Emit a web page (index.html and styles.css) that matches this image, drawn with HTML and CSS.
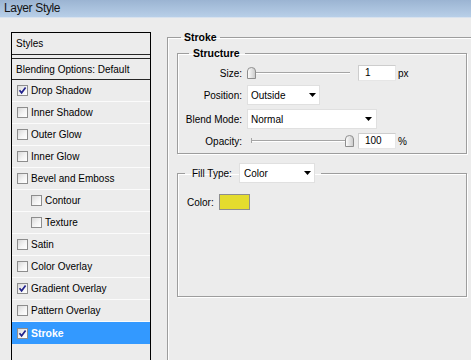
FILE: index.html
```html
<!DOCTYPE html>
<html>
<head>
<meta charset="utf-8">
<title>Layer Style</title>
<link rel="stylesheet" href="styles.css">
</head>
<body>
<div class="window">
  <div class="titlebar">Layer Style</div>
  <div class="main">
    <div class="styles-panel">
      <div class="panel-head">Styles</div>
      <div class="panel-blend">Blending Options: Default</div>
      <ul class="fx-list">
        <li class="fx"><span class="cb"><svg class="check" width="9" height="9" viewBox="0 0 9 9"><polyline points="1.5,4.2 3.6,6.8 7.6,1.6" /></svg></span>Drop Shadow</li>
        <li class="fx"><span class="cb"></span>Inner Shadow</li>
        <li class="fx"><span class="cb"></span>Outer Glow</li>
        <li class="fx"><span class="cb"></span>Inner Glow</li>
        <li class="fx"><span class="cb"></span>Bevel and Emboss</li>
        <li class="fx sub"><span class="cb"></span>Contour</li>
        <li class="fx sub"><span class="cb"></span>Texture</li>
        <li class="fx"><span class="cb"></span>Satin</li>
        <li class="fx"><span class="cb"></span>Color Overlay</li>
        <li class="fx"><span class="cb"><svg class="check" width="9" height="9" viewBox="0 0 9 9"><polyline points="1.5,4.2 3.6,6.8 7.6,1.6" /></svg></span>Gradient Overlay</li>
        <li class="fx"><span class="cb"></span>Pattern Overlay</li>
        <li class="fx selected"><span class="cb"><svg class="check" width="9" height="9" viewBox="0 0 9 9"><polyline points="1.5,4.2 3.6,6.8 7.6,1.6" /></svg></span>Stroke</li>
      </ul>
    </div>

    <fieldset class="group group-stroke">
      <legend class="group-title title-stroke">Stroke</legend>

      <fieldset class="group group-structure">
        <legend class="group-title title-structure">Structure</legend>
        <div class="form-grid">
          <span class="field-label">Size:</span>
          <div class="field-control">
            <div class="slider">
              <div class="slider-track"></div>
              <svg class="thumb" style="left:0px" width="9" height="12" viewBox="0 0 9 12"><defs><linearGradient id="tg1" x1="0" y1="0" x2="1" y2="0"><stop offset="0" stop-color="#ffffff"/><stop offset="1" stop-color="#c9c9c9"/></linearGradient></defs><path d="M0.5,11.5 V4 Q0.5,0.5 4.5,0.5 Q8.5,0.5 8.5,4 V11.5 Z" fill="url(#tg1)" stroke="#8e8e8e"/></svg>
            </div>
            <span class="textbox">1</span><span class="unit">px</span>
          </div>

          <span class="field-label">Position:</span>
          <div class="field-control">
            <div class="select select-position"><span>Outside</span><svg class="arrow" width="7" height="4" viewBox="0 0 7 4"><polygon points="0,0 7,0 3.5,4"/></svg></div>
          </div>

          <span class="field-label">Blend Mode:</span>
          <div class="field-control">
            <div class="select select-blend"><span>Normal</span><svg class="arrow" width="7" height="4" viewBox="0 0 7 4"><polygon points="0,0 7,0 3.5,4"/></svg></div>
          </div>

          <span class="field-label">Opacity:</span>
          <div class="field-control">
            <div class="slider">
              <div class="slider-track"></div>
              <svg class="thumb" style="left:98px" width="9" height="12" viewBox="0 0 9 12"><defs><linearGradient id="tg2" x1="0" y1="0" x2="1" y2="0"><stop offset="0" stop-color="#ffffff"/><stop offset="1" stop-color="#c9c9c9"/></linearGradient></defs><path d="M0.5,11.5 V4 Q0.5,0.5 4.5,0.5 Q8.5,0.5 8.5,4 V11.5 Z" fill="url(#tg2)" stroke="#8e8e8e"/></svg>
            </div>
            <span class="textbox">100</span><span class="unit">%</span>
          </div>
        </div>
      </fieldset>

      <fieldset class="group group-fill">
        <legend class="fill-legend"><span class="fill-label">Fill Type:</span><div class="select select-fill"><span>Color</span><svg class="arrow" width="7" height="4" viewBox="0 0 7 4"><polygon points="0,0 7,0 3.5,4"/></svg></div></legend>
        <div class="color-row"><span class="color-label">Color:</span><span class="swatch"></span></div>
      </fieldset>
    </fieldset>
  </div>
</div>
</body>
</html>
```

FILE: styles.css
```css
* { box-sizing: border-box; }
html, body { margin: 0; padding: 0; }
body {
  width: 471px;
  height: 360px;
  overflow: hidden;
  background: #ececec;
  font-family: "Liberation Sans", Arial, sans-serif;
  font-size: 10px;
  color: #000;
}
.window {
  width: 471px;
  height: 360px;
  display: flex;
  flex-direction: column;
  overflow: hidden;
}
.titlebar {
  flex: none;
  height: 18px;
  padding-left: 4px;
  background: linear-gradient(#9bb4d2, #b8cfe8);
  border-bottom: 1px solid #d8e2ee;
  font-size: 12px;
  letter-spacing: -0.35px;
  line-height: 17px;
  color: #141414;
}
.main {
  flex: 1;
  display: flex;
  align-items: flex-start;
  overflow: hidden;
}

/* left styles list */
.styles-panel {
  flex: none;
  margin: 14px 0 0 11px;
  width: 140px;
  height: 340px;
  border: 1px solid #000;
  background: #ececec;
}
.panel-head {
  height: 22px;
  padding-left: 4px;
  border-bottom: 1px solid #262626;
  display: flex;
  align-items: center;
}
.panel-blend {
  height: 22px;
  margin-top: 3px;
  padding-left: 4px;
  border-top: 1px solid #262626;
  border-bottom: 1px solid #262626;
  display: flex;
  align-items: center;
}
.fx-list {
  list-style: none;
  margin: 0;
  padding: 0;
}
.fx {
  height: 22px;
  padding-left: 5px;
  border-bottom: 1px solid #fbfbfb;
  display: flex;
  align-items: center;
  white-space: nowrap;
}
.fx.sub { padding-left: 19px; }
.fx.selected {
  height: 22px;
  border-bottom: none;
  background: #3399ff;
  color: #fff;
  font-weight: bold;
  font-size: 10.5px;
}
.cb {
  flex: none;
  width: 11px;
  height: 11px;
  margin-right: 3px;
  border: 1px solid #8d8d8d;
  background: linear-gradient(135deg, #d9d9d9, #f4f4f4 55%, #fff);
  display: flex;
  align-items: center;
  justify-content: center;
}
.check polyline {
  fill: none;
  stroke: #22228c;
  stroke-width: 1.7;
}

/* group boxes */
.group {
  margin: 0;
  padding: 0;
  min-width: 0;
  border: 1px solid #9d9d9d;
  box-shadow: 1px 1px 0 #fff, inset 1px 1px 0 #fff;
}
.group-title {
  font-weight: bold;
  font-size: 10.5px;
  line-height: 13px;
}
.group-stroke {
  flex: none;
  margin: 13px 0 0 16px;
  width: 330px;
  height: 360px;
}
.title-stroke {
  margin-left: 13px;
  padding: 0 3px;
}
.group-structure {
  margin: 3px 0 0 9px;
  width: 290px;
  padding: 5px 0 4px 0;
}
.title-structure {
  margin-left: 11px;
  padding: 0 5px 0 4px;
}
.form-grid {
  display: grid;
  grid-template-columns: 64px auto;
  grid-template-rows: 16px 20px 20px 16px;
  column-gap: 5px;
  row-gap: 4px;
}
.field-label {
  text-align: right;
  align-self: center;
  white-space: nowrap;
}
.field-control {
  display: flex;
  align-items: center;
}
.slider {
  position: relative;
  flex: none;
  width: 108px;
  height: 16px;
  padding: 7px 5px 0 4px;
}
.slider-track {
  position: relative;
  height: 2px;
  border-top: 1px solid #a5a5a5;
  border-bottom: 1px solid #fff;
}
.slider-track::before {
  content: "";
  position: absolute;
  left: 0;
  top: -3px;
  width: 1px;
  height: 5px;
  background: #a5a5a5;
}
.thumb {
  position: absolute;
  top: 2px;
  display: block;
}
.textbox {
  flex: none;
  width: 38px;
  height: 16px;
  margin-left: 3px;
  padding-left: 6px;
  background: #fff;
  border: 1px solid;
  border-color: #cdcdcd #e6e6e6 #e6e6e6 #cdcdcd;
  line-height: 14px;
}
.unit { margin-left: 2px; }
.select {
  flex: none;
  height: 20px;
  background: #fff;
  border: 1px solid #e0e0e0;
  display: flex;
  align-items: center;
  justify-content: space-between;
  padding: 0 3px 0 3px;
  font-weight: normal;
  font-size: 10px;
}
.select-position { width: 73px; }
.select-blend { width: 130px; padding-right: 4px; }
.select-fill { width: 76px; padding-left: 4px; }
.arrow { display: block; }
.arrow polygon { fill: #000; }

.group-fill {
  margin: 9px 0 0 9px;
  width: 290px;
  padding: 0 0 86px 0;
}
.fill-legend {
  margin-left: 7px;
  padding: 0 6px 0 7px;
  height: 20px;
  display: flex;
  align-items: center;
}
.fill-label {
  width: 47px;
  white-space: nowrap;
}
.color-row {
  margin: 11px 0 0 9px;
  height: 16px;
  display: flex;
  align-items: center;
}
.color-label { width: 32px; }
.swatch {
  width: 31px;
  height: 16px;
  border: 1px solid #8e8e8e;
  background: #e4dc2e;
}
```
